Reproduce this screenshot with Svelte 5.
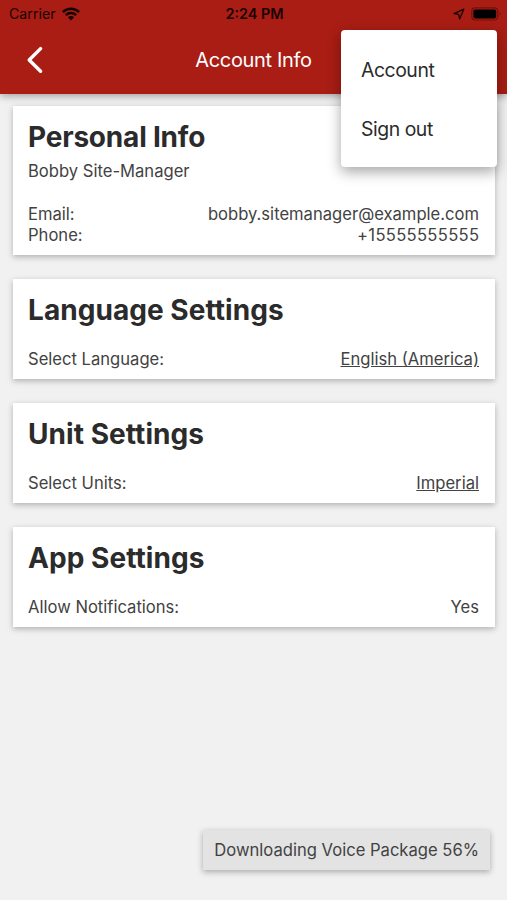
<script>
    let user = {
        name: "Bobby Site-Manager",
        email: "bobby.sitemanager@example.com",
        phone: "+15555555555",
    };

    let settings = [
        { title: "Language Settings", label: "Select Language:", value: "English (America)", link: true },
        { title: "Unit Settings", label: "Select Units:", value: "Imperial", link: true },
        { title: "App Settings", label: "Allow Notifications:", value: "Yes", link: false },
    ];

    let menuItems = ["Account", "Sign out"];
    let progress = 56;
</script>

<div class="screen">
    <header>
        <div class="status-bar">
            <div class="carrier">
                <span>Carrier</span>
                <svg width="18" height="14" viewBox="0 0 18 14">
                    <g fill="none" stroke="#180302" stroke-width="2.5">
                        <path d="M0.9 5.1 C5.4 0.7 12.6 0.7 17.1 5.1" />
                        <path d="M3.8 8.2 C6.7 5.4 11.3 5.4 14.2 8.2" />
                    </g>
                    <path d="M5.9 10.3 Q9 7.6 12.1 10.3 L9 13.4 Z" fill="#180302" />
                </svg>
            </div>
            <span class="time">2:24 PM</span>
            <div class="indicators">
                <svg width="12" height="12" viewBox="0 0 12 12">
                    <path
                        d="M1 5.7 L10.8 1.2 L6.6 10.9 L5.7 6.3 Z"
                        fill="none"
                        stroke="#180302"
                        stroke-width="1.3"
                        stroke-linejoin="round"
                    />
                </svg>
                <svg width="31" height="14" viewBox="0 0 31 14">
                    <rect x="0.8" y="0.8" width="26" height="12.2" rx="3.4" fill="none" stroke="#751009" stroke-width="1.2" />
                    <rect x="2.4" y="2.4" width="22.8" height="9" rx="1.8" fill="#000" />
                    <path d="M28.5 4.6 Q30.5 6.9 28.5 9.2 Z" fill="#751009" />
                </svg>
            </div>
        </div>
        <div class="nav">
            <button class="back" aria-label="Back">
                <svg width="18" height="28" viewBox="0 0 18 28">
                    <path
                        d="M14.6 2.6 L3.2 14 L14.6 25.2"
                        fill="none"
                        stroke="#fff"
                        stroke-width="3.4"
                        stroke-linecap="round"
                        stroke-linejoin="round"
                    />
                </svg>
            </button>
            <h1>Account Info</h1>
        </div>
    </header>

    <main>
        <section class="card personal">
            <h2>Personal Info</h2>
            <p class="name">{user.name}</p>
            <div class="row">
                <span>Email:</span>
                <span class="email">{user.email}</span>
            </div>
            <div class="row">
                <span>Phone:</span>
                <span class="phone">{user.phone}</span>
            </div>
        </section>

        {#each settings as item}
            <section class="card">
                <h2>{item.title}</h2>
                <div class="row">
                    <span>{item.label}</span>
                    <span class:link={item.link}>{item.value}</span>
                </div>
            </section>
        {/each}
    </main>

    <div class="menu">
        {#each menuItems as item}
            <div class="menu-item">{item}</div>
        {/each}
    </div>

    <div class="toast">Downloading Voice Package {progress}%</div>
</div>

<style>
    :global(body) {
        background: #f1f1f1;
    }

    .screen {
        position: relative;
        height: 900px;
        overflow: hidden;
        background: #f1f1f1;
        color: #424242;
        font-family: Inter, "Liberation Sans", sans-serif;
        font-size: 16.6px;
        line-height: 21px;
    }

    header {
        height: 94px;
        background: #a91d14;
        box-shadow: 0 2px 8px rgba(0, 0, 0, 0.35);
    }

    .status-bar {
        display: grid;
        grid-template-columns: 1fr auto 1fr;
        align-items: center;
        height: 27px;
        padding: 0 5px 0 9px;
        color: #180302;
        font-size: 14.2px;
    }

    .carrier,
    .indicators {
        display: flex;
        align-items: center;
        gap: 6px;
    }

    .indicators {
        justify-content: flex-end;
    }

    .time {
        font-size: 14.4px;
        font-weight: 600;
        transform: translateX(-1px);
    }

    .nav {
        display: grid;
        grid-template-columns: 60px 1fr 60px;
        align-items: center;
        height: 66px;
    }

    .back {
        display: flex;
        padding: 0 0 0 26px;
        border: 0;
        background: none;
    }

    h1 {
        margin: 0;
        color: #fff;
        font-size: 20px;
        font-weight: 400;
        letter-spacing: -0.33px;
        text-align: center;
    }

    main {
        display: flex;
        flex-direction: column;
        gap: 24px;
        padding: 12px 12px 0 13px;
    }

    .card {
        box-sizing: border-box;
        height: 100px;
        padding: 13px 16px 0 15px;
        background: #fff;
        box-shadow: 0 2px 6px rgba(0, 0, 0, 0.27);
    }

    .personal {
        height: 149px;
    }

    h2 {
        margin: 0 0 21px;
        color: #2b2b2b;
        font-size: 28px;
        font-weight: 700;
        letter-spacing: 0.05px;
        line-height: 36px;
    }

    .personal h2 {
        margin-bottom: 6px;
        letter-spacing: -0.2px;
    }

    .name {
        margin: 0 0 22px;
    }

    .row {
        display: flex;
        justify-content: space-between;
    }

    .phone {
        letter-spacing: 0.3px;
        margin-right: -0.3px;
    }

    .link {
        text-decoration: underline;
    }

    .menu {
        position: absolute;
        top: 30px;
        left: 341px;
        box-sizing: border-box;
        width: 156px;
        height: 137px;
        padding: 11px 20px;
        border-radius: 4px;
        background: #fff;
        box-shadow: 0 5px 14px rgba(0, 0, 0, 0.35);
    }

    .menu-item {
        color: #2b2b2b;
        font-size: 19.4px;
        letter-spacing: -0.45px;
        line-height: 58.5px;
    }

    .toast {
        position: absolute;
        right: 17px;
        bottom: 30px;
        padding: 0 11px;
        background: #e3e3e3;
        box-shadow: 0 2px 6px rgba(0, 0, 0, 0.3);
        font-size: 16.6px;
        line-height: 40px;
    }
</style>
